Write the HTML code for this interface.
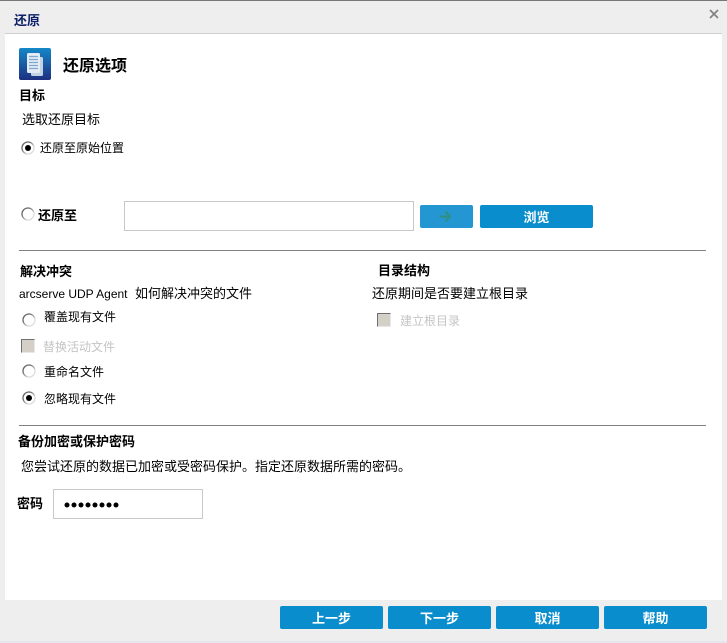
<!DOCTYPE html>
<html lang="zh">
<head>
<meta charset="utf-8">
<style>
html,body{margin:0;padding:0}
body{width:727px;height:643px;position:relative;overflow:hidden;background:#eeeeee;font-family:"Liberation Sans","WenQuanYi Zen Hei","Noto Sans CJK SC",sans-serif;font-size:12px;color:#000}
.a{position:absolute;white-space:nowrap;line-height:14px}
.a.m{font-size:13px;line-height:16px}
.a.b{font-weight:bold;font-size:13px;line-height:16px}
.g{color:#c4c4c4}
.hr{position:absolute;left:19px;width:687px;height:1px;background:#808080}
.btn{position:absolute;height:23px;background:#0a8dcc;border-radius:2px;color:#fff;font-weight:bold;text-align:center;line-height:25px;font-size:13px}
.inp{position:absolute;box-sizing:border-box;background:#fff;border:1px solid #c8c8c8}
.r{position:absolute;width:14px;height:14px}
.c{position:absolute;box-sizing:border-box;width:14px;height:14px;background:#d4d0c8;border:1px solid;border-color:#707070 #e8e8e8 #e8e8e8 #707070}
</style>
</head>
<body>
<svg width="0" height="0" style="position:absolute"><defs><linearGradient id="rg" x1="0" y1="0" x2="1" y2="1"><stop offset="0.3" stop-color="#666"/><stop offset="0.7" stop-color="#ddd"/></linearGradient></defs></svg>
<div style="position:absolute;left:0;top:0;width:727px;height:1px;background:#777"></div>
<div style="position:absolute;left:5px;top:33px;width:717px;height:1px;background:#cfcfcf"></div>
<div style="position:absolute;left:5px;top:34px;width:717px;height:566px;background:#fff"></div>
<div class="a b" style="left:14px;top:13px;color:#0b1f66">还原</div>
<svg style="position:absolute;left:709px;top:9px" width="10" height="10" viewBox="0 0 10 10"><path d="M1 1L9 9M9 1L1 9" stroke="#808080" stroke-width="1.6" fill="none"/></svg>

<svg style="position:absolute;left:19px;top:48px" width="32" height="32" viewBox="0 0 32 32">
<defs><linearGradient id="g" x1="0" y1="0" x2="0" y2="1"><stop offset="0" stop-color="#1488c8"/><stop offset="0.45" stop-color="#1a5fa8"/><stop offset="1" stop-color="#1d2f80"/></linearGradient></defs>
<rect width="32" height="32" rx="2" fill="url(#g)"/>
<rect x="12" y="9" width="12" height="19" rx="1.500" fill="#c3d3e6"/>
<rect x="8" y="5" width="13" height="20" rx="1.500" fill="#e3ecf5"/>
<path d="M10 8.500H19M10 11.500H19M10 14.500H19M10 17.500H19M10 20.500H19" stroke="#7fa6cc" stroke-width="1.200"/>
</svg>
<div class="a" style="left:63px;top:58px;font-size:16px;line-height:18px;font-weight:bold">还原选项</div>

<div class="a b" style="left:19px;top:88px">目标</div>
<div class="a m" style="left:22px;top:112px">选取还原目标</div>

<svg class="r" style="left:21px;top:141px" viewBox="0 0 14 14"><circle cx="7" cy="7" r="6" fill="#fff" stroke="url(#rg)" stroke-width="1.300"/><circle cx="7" cy="7" r="3" fill="#000"/></svg>
<div class="a" style="left:40px;top:141px">还原至原始位置</div>

<svg class="r" style="left:21px;top:207px" viewBox="0 0 14 14"><circle cx="7" cy="7" r="6" fill="#fff" stroke="url(#rg)" stroke-width="1.300"/></svg>
<div class="a b" style="left:38px;top:208px">还原至</div>
<div class="inp" style="left:124px;top:201px;width:290px;height:30px"></div>
<div class="btn" style="left:420px;top:205px;width:53px;background:#2496d2"></div>
<svg style="position:absolute;left:439px;top:210px" width="13" height="13" viewBox="0 0 13 13"><path d="M0.500 6.500H9M6.500 1.500L11 6.500L6.500 11.500" stroke="#2f8f7a" stroke-width="1.900" fill="none"/></svg>
<div class="btn" style="left:480px;top:205px;width:113px">浏览</div>

<div class="hr" style="top:250px"></div>

<div class="a b" style="left:20px;top:264px">解决冲突</div>
<div class="a" style="left:19px;top:287px">arcserve UDP Agent</div>
<div class="a m" style="left:135px;top:286px">如何解决冲突的文件</div>
<svg class="r" style="left:22px;top:313px" viewBox="0 0 14 14"><circle cx="7" cy="7" r="6" fill="#fff" stroke="url(#rg)" stroke-width="1.300"/></svg>
<div class="a" style="left:44px;top:310px">覆盖现有文件</div>
<div class="c" style="left:21px;top:339px"></div>
<div class="a g" style="left:43px;top:340px">替换活动文件</div>
<svg class="r" style="left:22px;top:364px" viewBox="0 0 14 14"><circle cx="7" cy="7" r="6" fill="#fff" stroke="url(#rg)" stroke-width="1.300"/></svg>
<div class="a" style="left:44px;top:365px">重命名文件</div>
<svg class="r" style="left:22px;top:391px" viewBox="0 0 14 14"><circle cx="7" cy="7" r="6" fill="#fff" stroke="url(#rg)" stroke-width="1.300"/><circle cx="7" cy="7" r="3" fill="#000"/></svg>
<div class="a" style="left:44px;top:392px">忽略现有文件</div>

<div class="a b" style="left:378px;top:263px">目录结构</div>
<div class="a m" style="left:372px;top:286px">还原期间是否要建立根目录</div>
<div class="c" style="left:377px;top:313px"></div>
<div class="a g" style="left:400px;top:314px">建立根目录</div>

<div class="hr" style="top:425px"></div>

<div class="a b" style="left:18px;top:434px">备份加密或保护密码</div>
<div class="a m" style="left:21px;top:459px">您尝试还原的数据已加密或受密码保护。指定还原数据所需的密码。</div>
<div class="a b" style="left:17px;top:496px">密码</div>
<div class="inp" style="left:53px;top:489px;width:150px;height:30px"></div>
<svg style="position:absolute;left:64px;top:501px" width="56" height="8" viewBox="0 0 56 8" fill="#000"><circle cx="3" cy="4" r="2.500"/><circle cx="10" cy="4" r="2.500"/><circle cx="17" cy="4" r="2.500"/><circle cx="24" cy="4" r="2.500"/><circle cx="31" cy="4" r="2.500"/><circle cx="38" cy="4" r="2.500"/><circle cx="45" cy="4" r="2.500"/><circle cx="52" cy="4" r="2.500"/></svg>

<div class="btn" style="left:280px;top:606px;width:103px">上一步</div>
<div class="btn" style="left:388px;top:606px;width:103px">下一步</div>
<div class="btn" style="left:496px;top:606px;width:103px">取消</div>
<div class="btn" style="left:604px;top:606px;width:103px">帮助</div>
<div style="position:absolute;left:0;top:641px;width:727px;height:2px;background:#e6e6ee"></div>
</body>
</html>
